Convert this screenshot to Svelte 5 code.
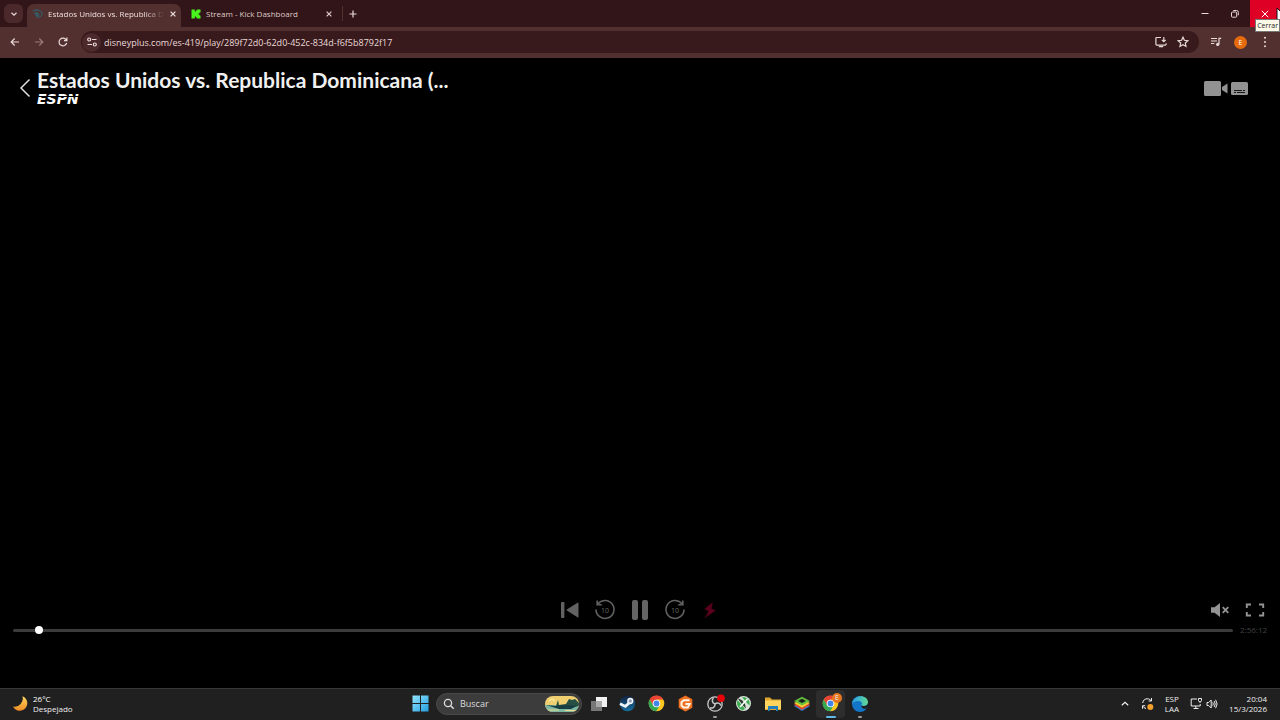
<script>
  const tabs = [
    { title: 'Estados Unidos vs. Republica D', active: true, icon: 'disney' },
    { title: 'Stream - Kick Dashboard', active: false, icon: 'kick' }
  ];
  const duration = 10572;
  let position = $state(192);
  let query = $state('');
  let address = $state('disneyplus.com/es-419/play/289f72d0-62d0-452c-834d-f6f5b8792f17');
</script>

<div class="screen">
  <header class="browser">
    <div class="strip">
      <button class="tab-search" aria-label="Buscar pestañas">
        <svg width="8" height="8" viewBox="0 0 8 8"><path d="M1.5 2.8 4 5.2 6.5 2.8" class="line" /></svg>
      </button>
      {#each tabs as tab}
        <div class="tab" class:active={tab.active}>
          {#if tab.icon === 'disney'}
            <svg width="11" height="11" viewBox="0 0 11 11" fill="none" stroke="#287080"><path d="M1 3.2C4 .8 9.5 2 10 5.5 10.4 8.5 7 9.6 4.5 8.9M2 6c1.2-1.4 5-1.2 5 .6 0 1.4-2.6 1.3-3.5.6M4.8 4.2v4.2" /></svg>
          {:else}
            <svg width="10" height="10" viewBox="0 0 10 10"><path d="M.5.5h3.3v2h1v-1h1v-1h3.7v3h-1v1h-1v1h1v1h1v3H5.8v-1h-1v-1h-1v2H.5z" fill="#48f51c" /></svg>
          {/if}
          <span class="tab-title">{tab.title}</span>
          <button class="tab-close" aria-label="Cerrar pestaña">
            <svg width="8" height="8" viewBox="0 0 8 8"><path d="m1.6 1.6 4.8 4.8m0-4.8L1.6 6.4" class="line" /></svg>
          </button>
        </div>
      {/each}
      <button class="new-tab" aria-label="Nueva pestaña">
        <svg width="10" height="10" viewBox="0 0 10 10"><path d="M5 1.5v7M1.5 5h7" class="line" /></svg>
      </button>
      <div class="window-buttons">
        <button aria-label="Minimizar"><svg width="10" height="10" viewBox="0 0 10 10"><path d="M1.5 4.5h7" class="line thin" /></svg></button>
        <button aria-label="Restaurar"><svg width="10" height="10" viewBox="0 0 10 10"><rect x="1.5" y="3" width="5.2" height="5.2" rx="1" class="line thin" /><path d="M3.3 1.5h3.2A1.8 1.8 0 0 1 8.3 3.3v3" class="line thin" /></svg></button>
        <button class="close" aria-label="Cerrar" aria-describedby="close-tip"><svg width="10" height="10" viewBox="0 0 10 10"><path d="m1.8 1.8 6.4 6.4m0-6.4L1.8 8.2" class="line thin" /></svg></button>
      </div>
    </div>

    <div class="toolbar">
      <nav class="nav">
        <button aria-label="Atrás"><svg width="12" height="12" viewBox="0 0 12 12"><path d="M10 6H2.3M5.7 2.5 2.2 6l3.5 3.5" class="line" /></svg></button>
        <button class="dim" aria-label="Adelante"><svg width="12" height="12" viewBox="0 0 12 12"><path d="M2 6h7.7M6.3 2.5 9.8 6 6.3 9.5" class="line" /></svg></button>
        <button aria-label="Recargar"><svg width="12" height="12" viewBox="0 0 12 12"><path d="M9.7 7A3.9 3.9 0 1 1 9.2 3.8L9.8 4.4M9.9 1.6v3H7" class="line" /></svg></button>
      </nav>
      <div class="omnibox">
        <button class="site" aria-label="Información del sitio">
          <svg width="12" height="12" viewBox="0 0 12 12"><path d="M6 3.5h4.5M1.5 8.5H6" class="line" /><circle cx="3.2" cy="3.5" r="1.5" class="line" /><circle cx="8.8" cy="8.5" r="1.5" class="line" /></svg>
        </button>
        <input class="address" aria-label="Dirección" bind:value={address} spellcheck="false" />
        <button aria-label="Instalar"><svg width="12" height="12" viewBox="0 0 12 12"><path d="M6 1.5H1.7a.8.8 0 0 0-.8.8v6c0 .4.4.8.8.8h8.6c.4 0 .8-.4.8-.8V7.3M3.8 10.7h4.4M8.8 1v4.5M6.9 3.8l1.9 1.9 1.9-1.9" class="line" /></svg></button>
        <button aria-label="Favorito"><svg width="12" height="12" viewBox="0 0 12 12"><path d="m6 1.2 1.4 3.1 3.4.4-2.5 2.3.7 3.4-3-1.7-3 1.7.7-3.4L1.2 4.7l3.4-.4z" class="line" /></svg></button>
      </div>
      <div class="tools">
        <button aria-label="Control multimedia"><svg width="12" height="12" viewBox="0 0 12 12"><path d="M1 2.5h6M1 5h6M1 7.5h3.3M9 8.3v-6h2.2" class="line" /><circle cx="7.7" cy="8.4" r="1.6" fill="currentColor" /></svg></button>
        <button class="avatar" aria-label="Perfil">E</button>
        <button class="menu" aria-label="Menú"><svg width="4" height="12" viewBox="0 0 4 12" fill="currentColor"><circle cx="2" cy="1.8" r="1" /><circle cx="2" cy="6" r="1" /><circle cx="2" cy="10.2" r="1" /></svg></button>
      </div>
    </div>
    <span class="tip" id="close-tip" role="tooltip">Cerrar</span>
    <svg class="cursor" width="12" height="18" viewBox="0 0 12 18"><path d="M1 1v14l3.5-3.2L7 17l2-1-2.4-5H11z" fill="#fff" stroke="#111" /></svg>
  </header>

  <main class="player">
    <div class="player-top">
      <button class="back" aria-label="Volver"><svg width="12" height="20" viewBox="0 0 12 20"><path d="M10.5 1.5 2 10l8.5 8.5" fill="none" stroke="#ddd" stroke-width="1.5" /></svg></button>
      <div class="heading">
        <h1>Estados Unidos vs. Republica Dominicana (...</h1>
        <span class="channel">ESPN</span>
      </div>
      <div class="player-options">
        <button aria-label="Cámaras"><svg width="24" height="16" viewBox="0 0 24 16" fill="#929292"><rect width="17" height="15" rx="1.5" /><path d="M18 6.1 23.5 2.5v10L18 8.9z" /></svg></button>
        <button aria-label="Audio y subtítulos"><svg width="17" height="14" viewBox="0 0 17 14"><rect width="17" height="13" rx="1.5" fill="#929292" /><path d="M3 8.5h8M12 8.5h2M3 10.5h2M6 10.5h8" stroke="#151515" /></svg></button>
      </div>
    </div>

    <div class="player-bottom">
      <div class="controls">
        <span></span>
        <div class="transport">
          <button aria-label="Desde el inicio"><svg width="20" height="18" viewBox="0 0 20 18" fill="#626262"><rect x="1" y="1" width="3.4" height="16" rx=".8" /><path d="M18.5 2.2v13.6a.6.6 0 0 1-1 .5L6.8 9.5a.6.6 0 0 1 0-1L17.5 1.7a.6.6 0 0 1 1 .5z" /></svg></button>
          <button aria-label="Retroceder 10 segundos"><svg width="22" height="22" viewBox="0 0 22 22"><path d="M4 4.8A9 9 0 1 1 2 10.5M3.2 1.5v4.2h4.6" fill="none" stroke="#626262" stroke-width="1.6" /><text x="11" y="13.5" class="ten">10</text></svg></button>
          <button aria-label="Pausa"><svg width="18" height="20" viewBox="0 0 18 20" fill="#646464"><rect x="1" width="6" height="20" rx="2" /><rect x="11" width="6" height="20" rx="2" /></svg></button>
          <button aria-label="Avanzar 10 segundos"><svg width="22" height="22" viewBox="0 0 22 22"><path d="M18 4.8A9 9 0 1 0 20 10.5M18.8 1.5v4.2h-4.6" fill="none" stroke="#626262" stroke-width="1.6" /><text x="11" y="13.5" class="ten">10</text></svg></button>
          <button aria-label="En vivo"><svg width="14" height="18" viewBox="0 0 14 18"><path d="M9.5 1.5 1.5 8l4 2-3.3 6.8L12.5 9.5l-4-1.8z" fill="#5c001e" stroke="#38000f" stroke-width=".6" /></svg></button>
        </div>
        <div class="side">
          <button aria-label="Activar sonido"><svg width="20" height="16" viewBox="0 0 20 16"><path d="M1 5.2h3.5L10 1v14l-5.5-4.2H1z" fill="#939393" /><path d="m12.7 5.2 5.6 5.6m0-5.6-5.6 5.6" stroke="#939393" stroke-width="1.8" /></svg></button>
          <button aria-label="Pantalla completa"><svg width="20" height="14" viewBox="0 0 20 14"><path d="M6 1.5H1.8V5M14 1.5h4.2V5M1.8 9v3.5H6M18.2 9v3.5H14" fill="none" stroke="#939393" stroke-width="1.9" /></svg></button>
        </div>
      </div>
      <div class="timeline">
        <input type="range" min="0" max={duration} bind:value={position} aria-label="Progreso" />
        <time>2:56:12</time>
      </div>
    </div>
  </main>

  <footer class="taskbar">
    <button class="weather">
      <svg width="17" height="17" viewBox="0 0 17 17"><defs><linearGradient id="moon" x2="0" y2="1"><stop stop-color="#ffd55f" /><stop offset="1" stop-color="#ee8d24" /></linearGradient></defs><path d="M10.4 1.2A7.5 7.5 0 1 1 1 11.4 8 8 0 0 0 10.4 1.2z" fill="url(#moon)" /></svg>
      <span class="stack"><b>26°C</b><span>Despejado</span></span>
    </button>

    <div class="apps">
      <button aria-label="Inicio"><svg width="17" height="17" viewBox="0 0 17 17"><defs><linearGradient id="win" x2="1" y2="1"><stop stop-color="#91e4ff" /><stop offset="1" stop-color="#249edf" /></linearGradient></defs><path d="M.5.5H8V8H.5zM9 .5h7.5V8H9zM.5 9H8v7.5H.5zM9 9h7.5v7.5H9z" fill="url(#win)" /></svg></button>
      <label class="search">
        <svg width="12" height="12" viewBox="0 0 12 12"><circle cx="5" cy="5" r="3.6" fill="none" stroke="#ddd" stroke-width="1.3" /><path d="m7.7 7.7 3 3" stroke="#ddd" stroke-width="1.5" /></svg>
        <input placeholder="Buscar" aria-label="Buscar" bind:value={query} />
        <svg width="34" height="16" viewBox="0 0 34 16"><defs><clipPath id="pill"><rect width="34" height="16" rx="8" /></clipPath></defs><g clip-path="url(#pill)"><path d="M0 0h34v16H0z" fill="#efcf70" /><path d="M0 9h34v7H0z" fill="#7db8a4" /><path d="M11 10 13 4l1 5 7-1 3-5 3 1 3-1 4 4v3l-12 2z" fill="#274f43" /><path d="m1 9 10 1 8-1 13 1-6 3H14z" fill="#183d43" /><path d="M2 14h12M20 14.5h11" stroke="#f3d98b" /><path d="m4 5 3-2 3 2" fill="none" stroke="#fff2b5" /></g></svg>
      </label>
      <button aria-label="Vista de tareas"><svg width="18" height="18" viewBox="0 0 18 18"><path d="M6 2h11v10H6z" fill="#f1f1f1" /><path d="M1 6h11v10H1z" fill="#777" /><path d="M6 6h6v6H6z" fill="#aaa" /></svg></button>
      <button aria-label="Steam"><svg width="17" height="17" viewBox="0 0 17 17"><defs><linearGradient id="steam" x2="0" y2="1"><stop stop-color="#112141" /><stop offset="1" stop-color="#176fa0" /></linearGradient></defs><circle cx="8.5" cy="8.5" r="7.8" fill="url(#steam)" /><path d="m1 8.8 5.4 2.6 4.6-4.2" fill="none" stroke="#f0f5fa" stroke-width="2.8" /><circle cx="11.3" cy="6" r="2.4" fill="#8fa0b5" stroke="#f4f7fa" stroke-width="1.5" /></svg></button>
      <button aria-label="Chrome">{@render chrome()}</button>
      <button aria-label="Gaming"><svg width="17" height="17" viewBox="0 0 17 17"><path d="m8.5.5 6.8 3.7v8.5l-6.8 3.8-6.8-3.8V4.2z" fill="#ee7020" /><path d="M12.5 5.3H6.7L4.5 7.2v3.4l2 1.8h4.3l1.9-3.5H8.4" fill="none" stroke="#fff3e8" stroke-width="2" /></svg></button>
      <button class="running" aria-label="OBS Studio"><svg width="20" height="20" viewBox="0 0 20 20"><circle cx="10" cy="10" r="7.2" fill="#222" stroke="#c9c9c9" stroke-width="1.3" /><path d="M10 10c-3-1-3.5-4-1.5-6M10 10c2.4-2 5.2-.8 5.9 1.6M10 10c.4 3-2.4 4.8-5.1 3.8" fill="none" stroke="#c9c9c9" stroke-width="1.5" /><circle cx="16" cy="4.2" r="3.8" fill="#ea0008" /></svg></button>
      <button aria-label="Xbox"><svg width="17" height="17" viewBox="0 0 17 17"><circle cx="8.5" cy="8.5" r="7.5" fill="#d9e2da" /><path d="M7 2c5-.6 9 4 7.5 8.5L11 7zM2.5 5C1 9 3 14 8 15.3l2-1.5z" fill="#3fae50" /><path d="m2.5 3 4.5 2.2 3 3.8 1 4.5L7.5 10z" fill="#263b2a" /><path d="M12.5 4 5 12" stroke="#fff" stroke-width="1.6" /></svg></button>
      <button aria-label="Explorador de archivos"><svg width="18" height="17" viewBox="0 0 18 17"><path d="M1 2.5h5l2 2h9V15H1z" fill="#e1a72e" /><path d="M1 5.5h16V14H1z" fill="#ffd45e" /><path d="M4 11h10v5h-2v-2H6v2H4z" fill="#237ebb" /></svg></button>
      <button aria-label="BlueStacks"><svg width="18" height="18" viewBox="0 0 18 18"><path d="m1 11 8-4 8 4-8 5z" fill="#2b87d4" /><path d="m1 9.8 8-4 8 4-8 5z" fill="#e53f32" /><path d="m1 7.9 8-4 8 4-8 4.8z" fill="#f2cd31" /><path d="m1 5.9 8-4.2 8 4.2-8 4.7z" fill="#63bc3e" /><path d="m5.2 5.9 3.8-2.1 3.8 2.1L9 8.1z" fill="#172119" /></svg></button>
      <button class="running current" aria-label="Chrome, perfil E">{@render chrome()}<span class="badge">E</span></button>
      <button class="running" aria-label="Edge"><svg width="18" height="18" viewBox="0 0 18 18"><defs><linearGradient id="edge" x2="1"><stop stop-color="#2a9deb" /><stop offset="1" stop-color="#62da91" /></linearGradient></defs><circle cx="9" cy="9" r="8" fill="#1275c8" /><path d="M1 9C2-1 17-1 17 7.5c0 3.5-5 4.4-6.8 2.7C12 8 10 6 7.5 6 4.7 6 2 7.2 1 9z" fill="url(#edge)" /><path d="M10.6 10.2C12.5 12 17 11 17 7.5c1 2.5 0 4.5-1.3 6-3 .9-5.9-.6-5.1-3.3z" fill="#202020" /></svg></button>
    </div>

    <div class="tray">
      <button aria-label="Mostrar iconos ocultos"><svg width="10" height="10" viewBox="0 0 10 10"><path d="M1.8 6.3 5 3.3l3.2 3" class="line" /></svg></button>
      <button aria-label="Actualización"><svg width="13" height="14" viewBox="0 0 13 14"><path d="M1.6 6A4.7 4.7 0 0 1 10 3.5M10.5 1v3H7.6M4.2 8.7H1.5v3M1.8 9.2A5 5 0 0 0 5 11.5" class="line thin" /><circle cx="9.3" cy="10" r="3" fill="#f3a02b" /></svg></button>
      <button class="stack language"><span>ESP</span><span>LAA</span></button>
      <button class="status" aria-label="Red y volumen">
        <svg width="13" height="13" viewBox="0 0 13 13"><path d="M7 2H1.2v7h9V7M3.5 11.5h5M5.8 9v2.5M10 6V4.5M8.5 1.5v2a1 1 0 0 0 1 1h1a1 1 0 0 0 1-1v-2z" class="line thin" /></svg>
        <svg width="12" height="12" viewBox="0 0 12 12"><path d="M1 4.5h1.7L5.2 2v8L2.7 7.5H1zM6.7 4.4q1.2 1.6 0 3.2M8.1 3q2.3 3 0 6M9.6 1.8q3 4.2 0 8.4" class="line thin" /></svg>
      </button>
      <button class="stack clock"><span>20:04</span><span>15/3/2026</span></button>
    </div>
  </footer>
</div>

{#snippet chrome()}
  <svg width="17" height="17" viewBox="0 0 17 17"><circle cx="8.5" cy="8.5" r="7.8" fill="#fbc61e" /><path d="M1.7 4.6A7.8 7.8 0 0 1 15.3 4.6H8.5L5.2 10.4z" fill="#e84335" /><path d="M1.7 4.6A7.8 7.8 0 0 0 8.2 16.3l3.5-5.9H5.2z" fill="#34a853" /><circle cx="8.5" cy="8.5" r="3.8" fill="#fff" /><circle cx="8.5" cy="8.5" r="2.9" fill="#4285e8" /></svg>
{/snippet}

<style>
  :global(body) { margin: 0; background: #000; }
  .screen { display: flex; flex-direction: column; min-height: 100vh; overflow: hidden; font-family: "Open Sans", "Noto Sans", sans-serif; font-size: 9px; color: #e9d9d9; }
  button { display: inline-flex; align-items: center; justify-content: center; flex: none; padding: 0; border: 0; background: none; color: inherit; font: inherit; }
  input { min-width: 0; padding: 0; border: 0; outline: 0; background: none; color: inherit; font: inherit; }
  svg { display: block; flex: none; }
  .line { fill: none; stroke: currentColor; stroke-width: 1.2; }
  .thin { stroke-width: 1; }

  .browser { position: relative; background: #321518; }
  .strip { display: flex; align-items: center; height: 27px; padding-left: 4px; }
  .tab-search { width: 19px; height: 19px; margin-right: 4px; border-radius: 6px; background: #4b292a; }
  .tab { display: flex; align-items: center; gap: 5px; width: 162px; height: 15px; box-sizing: border-box; padding: 0 9px 0 10px; border-right: 1px solid #52302f; color: #dec9c9; font-size: 8px; }
  .tab.active { width: 154px; height: 23px; align-self: flex-end; padding: 0 6px 4px 5px; border: 0; border-radius: 7px 7px 0 0; background: #52302f; color: #efdfdf; }
  .tab-title { flex: 1; white-space: nowrap; }
  .tab.active .tab-title { mask-image: linear-gradient(to right, #000 84%, transparent); }
  .tab-close { width: 8px; height: 12px; }
  .new-tab { width: 20px; height: 20px; }
  .window-buttons { display: flex; align-self: stretch; margin-left: auto; }
  .window-buttons button { width: 30px; }
  .window-buttons .close { background: #df0026; color: #fff; }
  .toolbar { display: flex; align-items: center; height: 30px; padding-bottom: 1px; background: #52302f; }
  .nav { display: flex; width: 81px; padding-left: 3px; box-sizing: border-box; }
  .nav button { width: 24px; height: 24px; }
  .dim { color: #9a7978; }
  .omnibox { display: flex; align-items: center; gap: 10px; flex: 1; height: 22px; padding: 0 10px 0 1px; border-radius: 11px; background: #381a1c; }
  .site { width: 19px; height: 19px; border-radius: 50%; background: #4c292b; }
  .address { flex: 1; margin-left: -7px; }
  .tools { display: flex; align-items: center; gap: 12px; padding: 0 9px 0 11px; }
  .menu { width: 12px; height: 20px; }
  .avatar { width: 13px; height: 13px; border-radius: 50%; background: #e66b0c; color: #fff; font-size: 7px; }
  .tip { position: absolute; right: 0; top: 19px; padding: 0 1px; border: 1px solid #777; background: #fffbe8; color: #222; font-size: 7px; line-height: 11px; }
  .cursor { position: absolute; top: 7px; right: -8px; clip-path: inset(0 0 6px 0); }

  .player { display: flex; flex: 1; flex-direction: column; justify-content: space-between; background: #000; }
  .player-top { display: flex; align-items: flex-start; padding: 10px 32px 0 19px; }
  .back { width: 12px; height: 40px; }
  .heading { flex: 1; min-width: 0; margin-left: 6px; }
  h1 { margin: 0; font: 700 21px/24px Lato, sans-serif; white-space: nowrap; color: #f0f0f0; }
  .channel { position: relative; display: table; font: italic 700 14px/14px "DejaVu Sans", sans-serif; color: #fff; }
  .channel::after { position: absolute; inset: 4px 0 auto; height: 1px; background: #000; content: ""; }
  .player-options { display: flex; gap: 3px; align-items: center; height: 42px; }
  .player-bottom { padding: 0 13px 50px; }
  .controls { display: grid; grid-template-columns: 1fr auto 1fr; align-items: center; height: 24px; }
  .transport { display: flex; gap: 12px; }
  .transport button { width: 23px; height: 24px; }
  .ten { fill: #626262; font: 7px "Noto Sans", sans-serif; text-anchor: middle; }
  .side { display: flex; justify-content: flex-end; gap: 15px; padding-right: 2px; }
  .timeline { display: flex; align-items: center; gap: 7px; height: 16px; }
  .timeline input { flex: 1; margin: 0; height: 8px; appearance: none; }
  .timeline input::-webkit-slider-runnable-track { height: 3px; border-radius: 2px; background: #3b3b3b; }
  .timeline input::-webkit-slider-thumb { width: 8px; height: 8px; margin-top: -3px; appearance: none; border-radius: 50%; background: #fff; }
  time { width: 27px; font-size: 8px; line-height: 10px; color: #404040; white-space: nowrap; }

  .taskbar { display: grid; grid-template-columns: 1fr auto 1fr; align-items: center; height: 32px; box-sizing: border-box; padding-bottom: 2px; border-top: 1px solid #383838; background: #202020; color: #eee; font-size: 8px; }
  .weather { justify-self: start; gap: 4px; margin-left: 12px; text-align: left; }
  .stack { display: flex; flex-direction: column; line-height: 10px; }
  .stack b { font-weight: 400; color: #fff; }
  .apps { display: flex; align-items: center; }
  .apps button { position: relative; width: 29px; height: 28px; }
  .search { display: flex; align-items: center; gap: 5px; width: 146px; height: 22px; margin: 0 2px 0 1px; padding: 0 2px 0 6px; box-sizing: border-box; border: 1px solid #494949; border-radius: 11px; background: #3c3c3c; }
  .search input { flex: 1; font-size: 9px; }
  .search input::placeholder { color: #ddd; opacity: 1; }
  .running::after { position: absolute; bottom: 0; left: 50%; width: 4px; height: 2px; border-radius: 1px; background: #999; content: ""; transform: translateX(-50%); }
  .apps .current { border-radius: 4px; background: #2d2d2d; }
  .current::after { width: 10px; background: #61b9e8; }
  .badge { position: absolute; top: 3px; right: 3px; width: 10px; height: 10px; border-radius: 50%; background: #e87722; font-size: 7px; line-height: 10px; text-align: center; }
  .tray { display: flex; align-items: center; justify-content: flex-end; gap: 11px; padding-right: 13px; }
  .status { gap: 3px; }
  .clock { align-items: flex-end; }
</style>
